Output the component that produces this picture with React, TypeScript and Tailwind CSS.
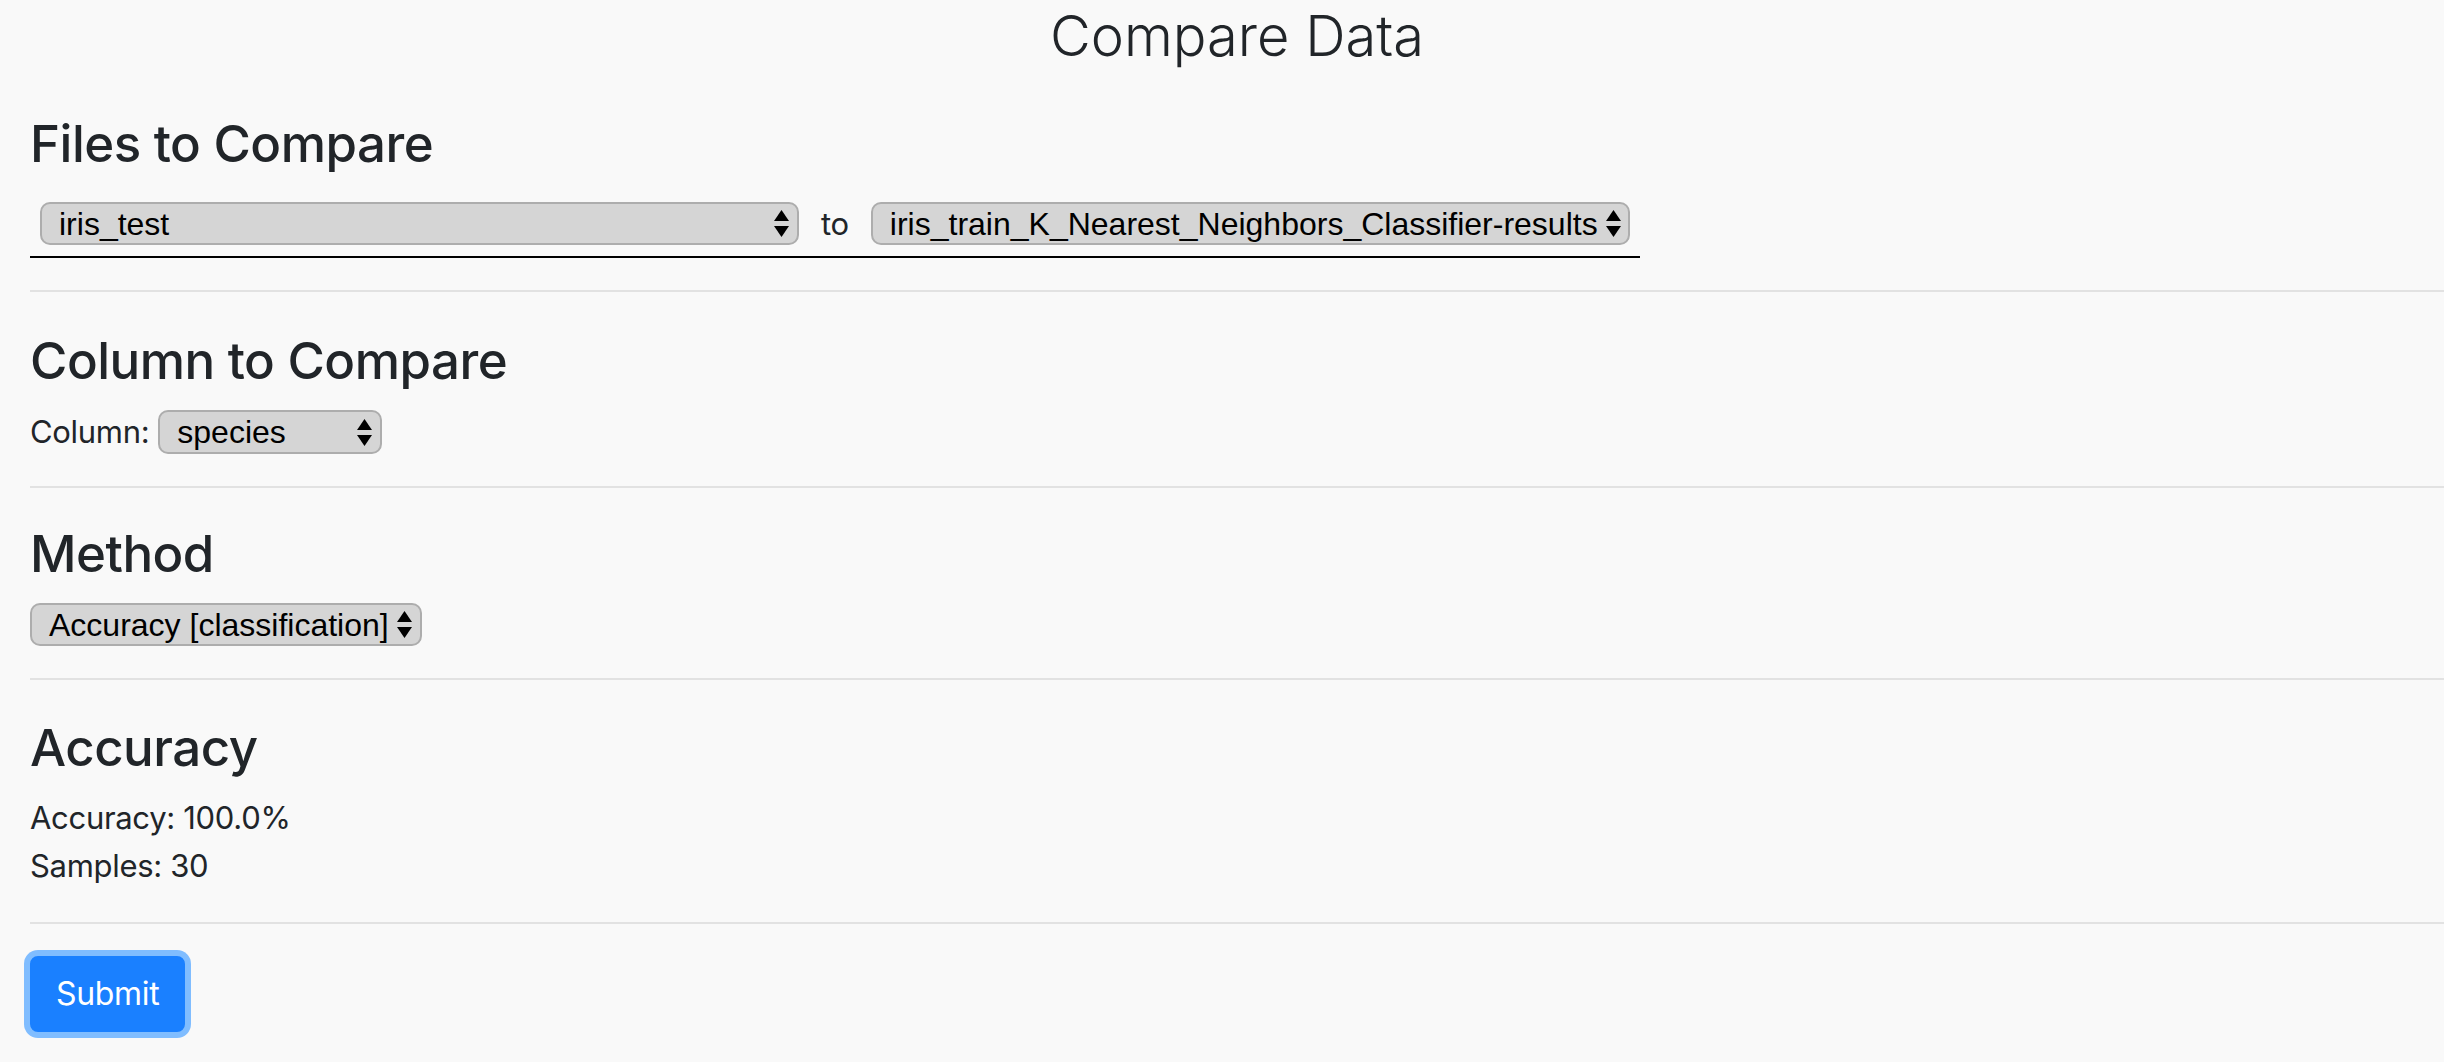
import React from "react";

function Arrows() {
  return (
    <svg width="15" height="27" viewBox="0 0 15 27" className="shrink-0">
      <polygon points="7.5,0 15,11 0,11" fill="#000" />
      <polygon points="0,16 15,16 7.5,27" fill="#000" />
    </svg>
  );
}

function MacSelect({ text, className }: { text: string; className: string }) {
  return (
    <div
      className={
        "flex items-center h-[43px] rounded-[10px] border-2 border-[#adadad] bg-[#d5d5d5] pl-[17px] pr-[8px] font-['Liberation_Sans',Arial,sans-serif] text-[32px] leading-none text-black " +
        className
      }
    >
      <span className="flex-1 whitespace-nowrap pr-[8px]">{text}</span>
      <Arrows />
    </div>
  );
}

function Hr({ className }: { className: string }) {
  return <div className={"h-[2px] bg-[#e2e2e2] " + className} />;
}

function Heading({ children, className }: { children: React.ReactNode; className: string }) {
  return (
    <h3 className={"text-[51px] leading-[64px] font-medium text-[#212529] tracking-[-0.01em] " + className}>
      {children}
    </h3>
  );
}

export default function App() {
  return (
    <div className="min-h-[1062px] w-full bg-[#f9f9f9] pl-[30px] font-['Inter',sans-serif] text-[#212529]">
      <h1 className="h-[72px] text-center text-[56px] leading-[72px] font-light text-[#212529]">
        Compare Data
      </h1>

      <Heading className="mt-[40px]">Files to Compare</Heading>
      <div className="mt-[17px] flex h-[65px] w-[1610px] items-center border-b-2 border-black pb-[2px]">
        <MacSelect text="iris_test" className="ml-[10px] w-[759px]" />
        <span className="mx-[22px] text-[31px] leading-[43px] tracking-[-0.01em]">to</span>
        <MacSelect text="iris_train_K_Nearest_Neighbors_Classifier-results" className="w-[759px]" />
      </div>

      <Hr className="mt-[32px]" />

      <Heading className="mt-[37px]">Column to Compare</Heading>
      <div className="mt-[15px] flex h-[48px] items-center">
        <span className="text-[31px] leading-[48px] tracking-[-0.01em]">Column:</span>
        <MacSelect text="species" className="ml-[9px] w-[224px] h-[44px]" />
      </div>

      <Hr className="mt-[30px]" />

      <Heading className="mt-[34px]">Method</Heading>
      <div className="mt-[17px] flex">
        <MacSelect text="Accuracy [classification]" className="w-fit" />
      </div>

      <Hr className="mt-[32px]" />

      <Heading className="mt-[36px]">Accuracy</Heading>
      <div className="mt-[14px] text-[31px] leading-[48px] tracking-[-0.01em]">
        <p>Accuracy: 100.0%</p>
        <p>Samples: 30</p>
      </div>

      <Hr className="mt-[32px]" />

      <div className="mt-[32px]">
        <button className="h-[76px] rounded-[8px] border-2 border-[#1a80ff] bg-[#1a80ff] px-[24px] text-[32px] leading-[48px] tracking-[-0.01em] text-white shadow-[0_0_0_6px_#80bdff]">
          Submit
        </button>
      </div>
    </div>
  );
}
